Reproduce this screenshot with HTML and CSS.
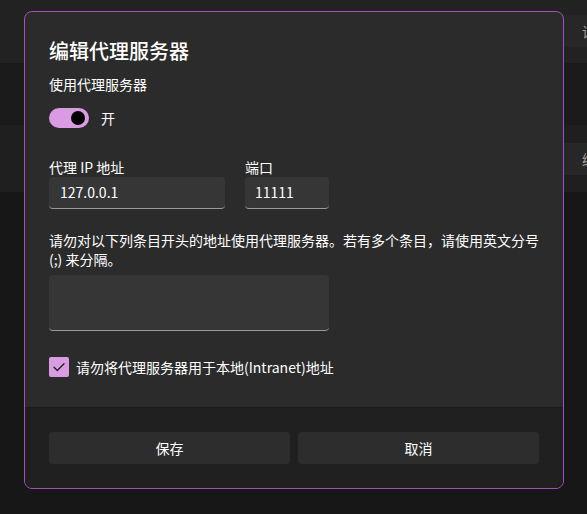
FILE: index.html
```html
<!DOCTYPE html>
<html lang="zh-CN">
<head>
<meta charset="utf-8">
<title>编辑代理服务器</title>
<link rel="stylesheet" href="styles.css">
</head>
<body>
<div class="page">
  <div class="band band-a">
    <div class="row"><span class="row-text">设</span></div>
  </div>
  <div class="band band-b"></div>
  <div class="band band-c">
    <div class="row"><span class="row-text">编</span></div>
  </div>
</div>

<div class="dialog">
  <div class="dialog-body">
    <h1 class="title">编辑代理服务器</h1>
    <div class="label">使用代理服务器</div>
    <div class="toggle-row">
      <span class="toggle"><span class="knob"></span></span>
      <span class="toggle-text">开</span>
    </div>
    <div class="fields">
      <div class="field field-ip">
        <div class="label">代理 IP 地址</div>
        <div class="input">127.0.0.1</div>
      </div>
      <div class="field field-port">
        <div class="label">端口</div>
        <div class="input">11111</div>
      </div>
    </div>
    <p class="desc">请勿对以下列条目开头的地址使用代理服务器。若有多个条目，请使用英文分号 (;) 来分隔。</p>
    <div class="textarea"></div>
    <div class="check-row">
      <span class="checkbox">
        <svg width="20" height="20" viewBox="0 0 20 20"><path d="M5 10.2 L8.3 13.5 L15 6.8" fill="none" stroke="#1c1c1c" stroke-width="1.3" stroke-linecap="round" stroke-linejoin="round"/></svg>
      </span>
      <span class="check-text">请勿将代理服务器用于本地(Intranet)地址</span>
    </div>
  </div>
  <div class="dialog-footer">
    <button class="btn">保存</button>
    <button class="btn">取消</button>
  </div>
</div>
</body>
</html>
```

FILE: styles.css
```css
* { box-sizing: border-box; }
html, body {
  margin: 0;
  padding: 0;
  width: 587px;
  height: 514px;
  overflow: hidden;
  background: #171717;
  font-family: "Noto Sans CJK SC", "Noto Sans", sans-serif;
  color: #ffffff;
}
.page { width: 587px; }
.band { position: relative; }
.band-a { height: 63px; background: #222222; padding-top: 15px; }
.band-b { height: 62px; background: #1b1b1b; }
.band-c { height: 67px; background: #1f1f1f; padding-top: 18px; }
.row {
  margin-left: 300px;
  height: 32px;
  background: #272727;
  display: flex;
  align-items: center;
  padding-left: 282px;
  overflow: hidden;
}
.row-text { font-size: 14px; color: #a0a0a0; white-space: nowrap; }

.dialog {
  position: absolute;
  left: 24px;
  top: 11px;
  width: 540px;
  height: 478px;
  border: 1px solid #a24fc0;
  border-radius: 8px;
  background: #2b2b2b;
  overflow: hidden;
  display: flex;
  flex-direction: column;
}
.dialog-body {
  padding: 25px 24px 0 24px;
  height: 395px;
}
.title {
  margin: 0;
  font-size: 20px;
  line-height: 28px;
  font-weight: 500;
  color: #ffffff;
}
.label {
  font-size: 14px;
  line-height: 20px;
  color: #ffffff;
}
.title + .label { margin-top: 9px; }
.toggle-row {
  margin-top: 14px;
  height: 20px;
  display: flex;
  align-items: center;
}
.toggle {
  width: 40px;
  height: 20px;
  border-radius: 10px;
  background: #d99ce3;
  display: flex;
  align-items: center;
  justify-content: flex-end;
  padding-right: 4px;
}
.knob {
  width: 14px;
  height: 14px;
  border-radius: 50%;
  background: #000000;
}
.toggle-text {
  margin-left: 12px;
  font-size: 14px;
  line-height: 20px;
}
.fields {
  margin-top: 29px;
  display: flex;
  gap: 20px;
}
.field-ip { width: 176px; }
.field-port { width: 84px; }
.input {
  height: 32px;
  background: #363636;
  border-radius: 4px;
  border-bottom: 1px solid #9a9a9a;
  padding-left: 11px;
  font-size: 14px;
  line-height: 31px;
  color: #ffffff;
}
.field-port .input { padding-left: 10px; }
.desc {
  margin: 22px 0 0 0;
  font-size: 14px;
  line-height: 19px;
  color: #ffffff;
}
.textarea {
  margin-top: 6px;
  width: 280px;
  height: 56px;
  background: #363636;
  border-radius: 4px;
  border-bottom: 1px solid #9a9a9a;
}
.check-row {
  margin-top: 26px;
  display: flex;
  align-items: center;
  height: 20px;
}
.checkbox {
  width: 20px;
  height: 20px;
  border-radius: 2px;
  background: #d99ce3;
  display: block;
}
.checkbox svg { display: block; }
.check-text {
  margin-left: 7px;
  font-size: 14px;
  line-height: 20px;
}
.dialog-footer {
  flex: 1;
  background: #202020;
  border-top: 1px solid #1d1d1d;
  padding: 24px;
  display: flex;
  gap: 8px;
}
.btn {
  flex: 1;
  height: 32px;
  border: none;
  border-radius: 4px;
  background: #2d2d2d;
  color: #ffffff;
  font-family: "Noto Sans CJK SC", "Noto Sans", sans-serif;
  font-size: 14px;
  line-height: 20px;
  padding: 0;
}
```
